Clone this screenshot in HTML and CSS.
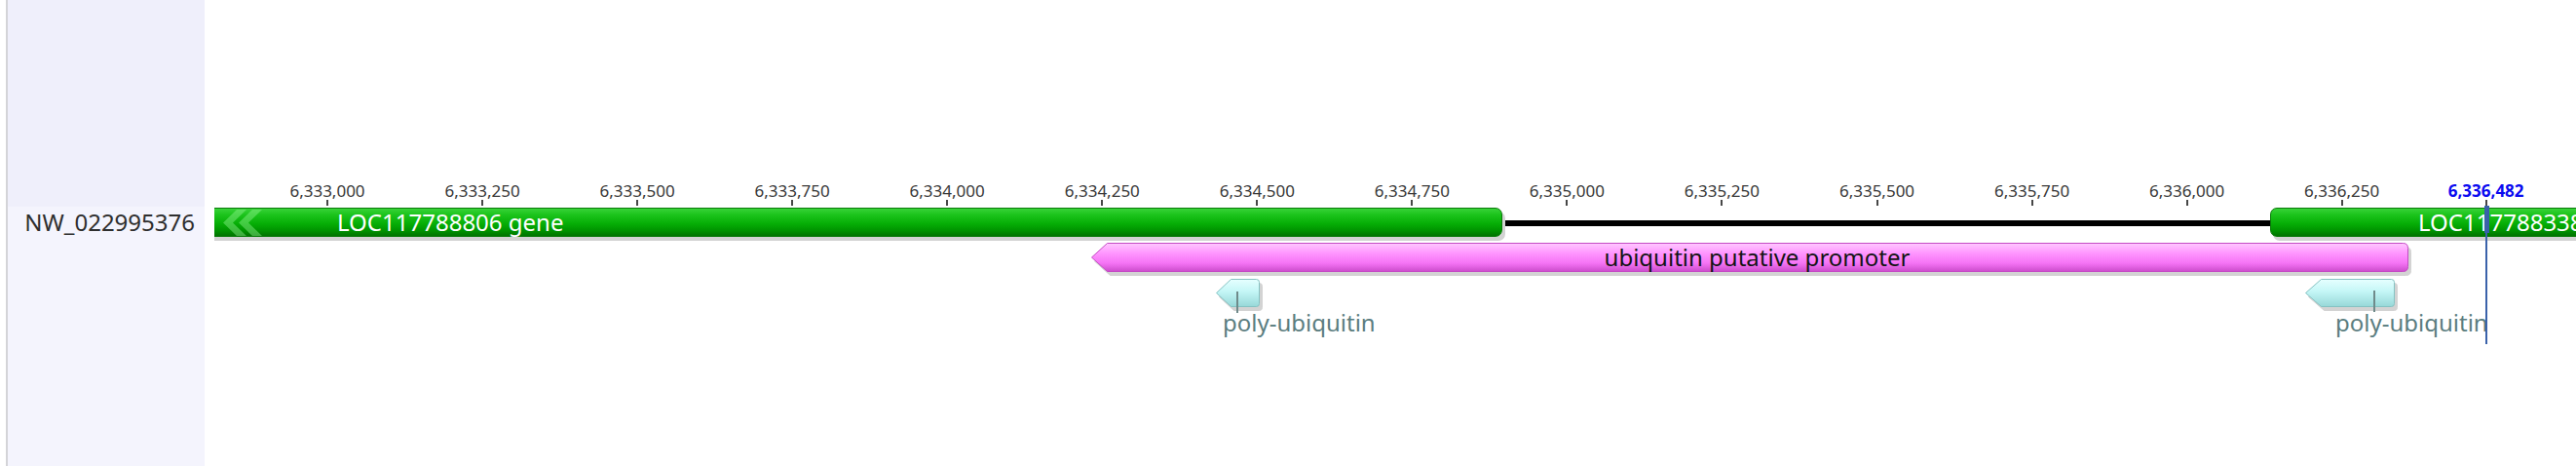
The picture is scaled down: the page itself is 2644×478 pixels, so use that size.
FILE: index.html
```html
<!DOCTYPE html>
<html lang="en">
<head>
<meta charset="utf-8">
<title>Sequence view</title>
<link rel="stylesheet" href="styles.css">
</head>
<body>
<svg class="defs" width="0" height="0" aria-hidden="true">
  <defs>
    <linearGradient id="gPink" x1="0" y1="0" x2="0" y2="1">
      <stop offset="0" stop-color="#ffc8ff"/>
      <stop offset="0.35" stop-color="#ff96ff"/>
      <stop offset="0.7" stop-color="#f574f5"/>
      <stop offset="1" stop-color="#cc4ccc"/>
    </linearGradient>
    <linearGradient id="gCyan" x1="0" y1="0" x2="0" y2="1">
      <stop offset="0" stop-color="#e6ffff"/>
      <stop offset="0.45" stop-color="#c4f6f6"/>
      <stop offset="1" stop-color="#97d8d8"/>
    </linearGradient>
  </defs>
</svg>
<div class="app">
  <div class="gutter"></div>
  <aside class="seqpanel">
    <div class="seqpanel-top"></div>
    <div class="seqpanel-row"><span class="seqname">NW_022995376</span></div>
  </aside>
  <main class="track">
    <div class="ruler">
      <div class="tick" style="left:116px"><span class="tick-label">6,333,000</span></div>
      <div class="tick" style="left:275.05px"><span class="tick-label">6,333,250</span></div>
      <div class="tick" style="left:434.1px"><span class="tick-label">6,333,500</span></div>
      <div class="tick" style="left:593.15px"><span class="tick-label">6,333,750</span></div>
      <div class="tick" style="left:752.2px"><span class="tick-label">6,334,000</span></div>
      <div class="tick" style="left:911.25px"><span class="tick-label">6,334,250</span></div>
      <div class="tick" style="left:1070.3px"><span class="tick-label">6,334,500</span></div>
      <div class="tick" style="left:1229.35px"><span class="tick-label">6,334,750</span></div>
      <div class="tick" style="left:1388.4px"><span class="tick-label">6,335,000</span></div>
      <div class="tick" style="left:1547.45px"><span class="tick-label">6,335,250</span></div>
      <div class="tick" style="left:1706.5px"><span class="tick-label">6,335,500</span></div>
      <div class="tick" style="left:1865.55px"><span class="tick-label">6,335,750</span></div>
      <div class="tick" style="left:2024.6px"><span class="tick-label">6,336,000</span></div>
      <div class="tick" style="left:2183.65px"><span class="tick-label">6,336,250</span></div>
    </div>

    <div class="backbone" style="left:1310px;width:810px"></div>

    <div class="gene gene-left" style="left:-10px;width:1332px">
      <svg class="chevrons" width="52" height="30" viewBox="0 0 52 30">
        <polygon points="22,2 8,15.5 22,29 32,29 18,15.5 32,2"/>
        <polygon points="38,2 24,15.5 38,29 48,29 34,15.5 48,2"/>
      </svg>
      <span class="gene-label" style="left:135px">LOC117788806 gene</span>
    </div>

    <div class="gene gene-right" style="left:2110px;width:400px">
      <span class="gene-label" style="left:151px">LOC117788338 gene</span>
    </div>

    <div class="feature promoter" style="left:899.5px;top:249px;width:1352px">
      <svg class="shape" width="1352" height="30" viewBox="0 0 1352 30">
        <path d="M16.5,0.5 H1346.5 Q1351.5,0.5 1351.5,5.5 V24.5 Q1351.5,29.5 1346.5,29.5 H16.5 L0.5,15 Z" fill="url(#gPink)" stroke="#c44ac4" stroke-width="1"/>
      </svg>
      <span class="promoter-label">ubiquitin putative promoter</span>
    </div>

    <div class="feature cds" style="left:1028px;top:286px;width:45px">
      <svg class="shape" width="45" height="29" viewBox="0 0 45 29">
        <path d="M15.5,0.5 H41.5 Q44.5,0.5 44.5,3.5 V25.5 Q44.5,28.5 41.5,28.5 H15.5 L0.5,14.5 Z" fill="url(#gCyan)" stroke="#86c2c2" stroke-width="1"/>
      </svg>
    </div>
    <div class="leader" style="left:1049px;top:299px"></div>
    <span class="cds-label" style="left:1035px">poly-ubiquitin</span>

    <div class="feature cds" style="left:2146px;top:286px;width:92px">
      <svg class="shape" width="92" height="29" viewBox="0 0 92 29">
        <path d="M16.5,0.5 H88.5 Q91.5,0.5 91.5,3.5 V25.5 Q91.5,28.5 88.5,28.5 H16.5 L0.5,14.5 Z" fill="url(#gCyan)" stroke="#86c2c2" stroke-width="1"/>
      </svg>
    </div>
    <div class="leader" style="left:2216px;top:298px"></div>
    <span class="cds-label" style="left:2177px">poly-ubiquitin</span>

    <div class="cursor" style="left:2331.7px">
      <span class="cursor-label">6,336,482</span>
      <div class="cursor-tick"></div>
      <div class="cursor-grip"></div>
      <div class="cursor-line"></div>
    </div>
  </main>
</div>
</body>
</html>
```

FILE: styles.css
```css
html, body {
  margin: 0;
  padding: 0;
  background: #ffffff;
}

body {
  font-family: "Noto Sans", "Open Sans", "DejaVu Sans", sans-serif;
  color: #2b2b2b;
  overflow: hidden;
}

.defs {
  position: absolute;
  width: 0;
  height: 0;
}

.app {
  display: flex;
  width: 2644px;
  height: 478px;
}

.gutter {
  width: 6px;
  flex: none;
  background: #ffffff;
}

.seqpanel {
  width: 202px;
  flex: none;
  border-left: 2px solid #d4d4d8;
  background: #f4f4fd;
  display: flex;
  flex-direction: column;
}

.seqpanel-top {
  height: 212px;
  background: #efeffb;
}

.seqpanel-row {
  padding-top: 1px;
  padding-right: 10px;
  text-align: right;
}

.seqname {
  font-size: 24px;
  line-height: 30px;
  color: #2e2e2e;
}

.track {
  position: relative;
  margin-left: 10px;
  flex: 1;
  height: 478px;
  overflow: hidden;
}

/* ruler */
.tick {
  position: absolute;
  top: 187px;
  width: 0;
  height: 24px;
}

.tick-label {
  position: absolute;
  left: 0;
  top: 0;
  transform: translateX(-50%);
  white-space: nowrap;
  font-size: 17px;
  line-height: 17px;
  color: #383838;
}

.tick::after {
  content: "";
  position: absolute;
  left: -1px;
  top: 18px;
  width: 2px;
  height: 6px;
  background: #474747;
}

/* genes */
.backbone {
  position: absolute;
  top: 226px;
  height: 6px;
  background: #000000;
}

.gene {
  position: absolute;
  top: 213px;
  height: 30px;
  box-sizing: border-box;
  border: 1px solid #0b7a0b;
  background: linear-gradient(#38d238 0%, #1cc41c 22%, #06ae06 55%, #009400 80%, #007400 100%);
  box-shadow: 3px 4px 0 #d3d3d3;
}

.gene-left {
  border-radius: 0 7px 7px 0;
}

.gene-right {
  border-radius: 7px 0 0 7px;
}

.gene-label {
  position: absolute;
  top: -1px;
  white-space: nowrap;
  font-size: 24px;
  line-height: 30px;
  color: #ffffff;
}

.chevrons {
  position: absolute;
  left: 10px;
  top: -1px;
}

.chevrons polygon {
  fill: rgba(150, 245, 150, 0.42);
}

/* features */
.feature {
  position: absolute;
}

.shape {
  display: block;
  overflow: visible;
  filter: drop-shadow(3px 4px 0 #d3d3d3);
}

.promoter-label {
  position: absolute;
  left: 16px;
  right: 0;
  top: 0;
  text-align: center;
  font-size: 24px;
  line-height: 30px;
  color: #141414;
  white-space: nowrap;
}

.leader {
  position: absolute;
  width: 2px;
  height: 22px;
  background: #6f8a8a;
}

.cds-label {
  position: absolute;
  top: 319px;
  font-size: 24px;
  line-height: 24px;
  color: #5b7d80;
  white-space: nowrap;
}

/* cursor */
.cursor {
  position: absolute;
  top: 187px;
  width: 0;
  z-index: 5;
}

.cursor-label {
  position: absolute;
  left: 0;
  top: 0;
  transform: translateX(-50%);
  font-size: 17px;
  line-height: 17px;
  font-weight: 700;
  color: #0a0af0;
  white-space: nowrap;
}

.cursor-tick {
  position: absolute;
  left: -1px;
  top: 18px;
  width: 2px;
  height: 6px;
  background: #474747;
}

.cursor-grip {
  position: absolute;
  left: -2px;
  top: 24px;
  width: 5px;
  height: 28px;
  background: #3560a8;
}

.cursor-line {
  position: absolute;
  left: -1px;
  top: 24px;
  width: 2px;
  height: 142px;
  background: #3a62aa;
}
```
